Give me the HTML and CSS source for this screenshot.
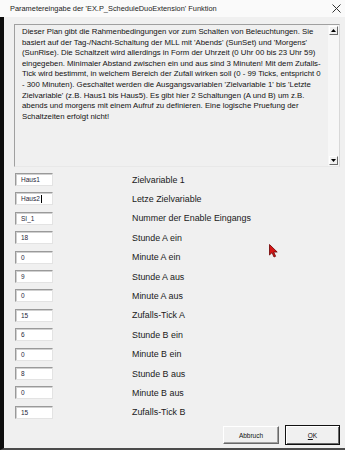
FILE: index.html
```html
<!DOCTYPE html>
<html lang="de">
<head>
<meta charset="UTF-8" />
<meta name="viewport" content="width=device-width, initial-scale=1" />
<title>Parametereingabe</title>
<link rel="stylesheet" href="styles.css">
</head>
<body>

<div class="window">
  <div class="titlebar">
    <span class="title">Parametereingabe der 'EX.P_ScheduleDuoExtension' Funktion</span>
    <svg class="close" width="9" height="9" viewBox="0 0 9 9">
      <path d="M0.5 0.5 L8.5 8.5 M8.5 0.5 L0.5 8.5" stroke="#333" stroke-width="1" fill="none"/>
    </svg>
  </div>

  <div class="frame">
    <div class="memo">
      <div class="memo-text">
        <div>Dieser Plan gibt die Rahmenbedingungen vor zum Schalten von Beleuchtungen. Sie</div>
        <div>basiert auf der Tag-/Nacht-Schaltung der MLL mit 'Abends' (SunSet) und 'Morgens'</div>
        <div>(SunRise). Die Schaltzeit wird allerdings in Form der Uhrzeit (0 Uhr 00 bis 23 Uhr 59)</div>
        <div>eingegeben. Minimaler Abstand zwischen ein und aus sind 3 Minuten! Mit dem Zufalls-</div>
        <div>Tick wird bestimmt, in welchem Bereich der Zufall wirken soll (0 - 99 Ticks, entspricht 0</div>
        <div>- 300 Minuten). Geschaltet werden die Ausgangsvariablen 'Zielvariable 1' bis 'Letzte</div>
        <div>Zielvariable' (z.B. Haus1 bis Haus5). Es gibt hier 2 Schaltungen (A und B) um z.B.</div>
        <div>abends und morgens mit einem Aufruf zu definieren. Eine logische Pruefung der</div>
        <div>Schaltzeiten erfolgt nicht!</div>
      </div>
      <div class="scroll">
        <span class="arrow"><svg width="5" height="3" viewBox="0 0 5 3"><path d="M0 3 L2.5 0 L5 3 Z" fill="#000"/></svg></span>
        <span class="arrow"><svg width="5" height="3" viewBox="0 0 5 3"><path d="M0 0 L5 0 L2.5 3 Z" fill="#000"/></svg></span>
      </div>
    </div>

    <div class="fields">
      <div class="field">Haus1</div><div class="label">Zielvariable 1</div>
      <div class="field">Haus2<span class="caret"></span></div><div class="label">Letze Zielvariable</div>
      <div class="field">SI_1</div><div class="label">Nummer der Enable Eingangs</div>
      <div class="field">18</div><div class="label">Stunde A ein</div>
      <div class="field">0</div><div class="label">Minute A ein</div>
      <div class="field">9</div><div class="label">Stunde A aus</div>
      <div class="field">0</div><div class="label">Minute A aus</div>
      <div class="field">15</div><div class="label">Zufalls-Tick A</div>
      <div class="field">6</div><div class="label">Stunde B ein</div>
      <div class="field">0</div><div class="label">Minute B ein</div>
      <div class="field">8</div><div class="label">Stunde B aus</div>
      <div class="field">0</div><div class="label">Minute B aus</div>
      <div class="field">15</div><div class="label">Zufalls-Tick B</div>
    </div>

    <div class="actions">
      <button class="btn">Abbruch</button>
      <button class="btn default"><u>O</u>K</button>
    </div>
  </div>
</div>

<!-- mouse pointer seen in the capture -->
<svg class="pointer" width="10" height="14" viewBox="0 0 10 14">
  <path d="M0.5 0.5 L0.5 11 L3 8.6 L5 13 L6.6 12.3 L4.7 8 L8.2 8 Z" fill="#d41616" stroke="#6b0000" stroke-width="0.8"/>
</svg>

</body>
</html>
```

FILE: styles.css
```css
body {
  margin: 0;
  background: #f0f0f0;
  font-family: 'Liberation Sans', Arial, sans-serif;
  color: #111;
}
.window {
  width: 345px;
  height: 450px;
  display: flex;
  flex-direction: column;
}
.titlebar {
  height: 17px;
  background: #fafafa;
  display: flex;
  align-items: center;
  justify-content: space-between;
  padding: 0 4px 0 10px;
  font-size: 7.4px;
  color: #222;
}
.close {
  display: block;
}
.frame {
  flex: 1;
  border-left: 4px solid #0d0d0d;
  border-bottom: 2px solid #4b4b4b;
  background: #f0f0f0;
  padding: 7px 5px 0 10px;
  display: flex;
  flex-direction: column;
}
.memo {
  width: 326px;
  height: 143px;
  box-sizing: border-box;
  border: 1px solid;
  border-color: #a0a0a0 #d8d8d8 #e8e8e8 #a0a0a0;
  background: #f0f0f0;
  position: relative;
  display: flex;
}
.memo-text {
  flex: 1;
  width: 0;
  padding: 2px 0 0 7px;
  font-size: 7.8px;
  line-height: 10.6px;
  white-space: nowrap;
  color: #111;
  position: relative;
  z-index: 1;
}
.scroll {
  width: 11px;
  background: #f7f7f7;
  display: flex;
  flex-direction: column;
  justify-content: space-between;
  align-items: center;
  padding: 1px 0;
}
.arrow {
  width: 9px;
  height: 9px;
  box-sizing: border-box;
  background: #f0f0f0;
  border: 1px solid;
  border-color: #fff #696969 #696969 #fff;
  display: flex;
  align-items: center;
  justify-content: center;
}
.fields {
  margin-top: 6px;
  padding-left: 1px;
  display: grid;
  grid-template-columns: 38px auto;
  grid-auto-rows: 13px;
  column-gap: 79px;
  row-gap: 6.42px;
  align-items: center;
}
.field {
  height: 13px;
  box-sizing: border-box;
  background: #fff;
  border: 1px solid;
  border-color: #9a9a9a #e3e3e3 #e3e3e3 #9a9a9a;
  box-shadow: inset 1px 1px 0 #d0d0d0;
  padding-left: 5px;
  font-size: 6.5px;
  line-height: 11px;
  color: #1f1f3a;
  display: flex;
  align-items: center;
}
.caret {
  display: inline-block;
  width: 1px;
  height: 8px;
  background: #000;
  margin-left: 1px;
}
.label {
  font-size: 8.9px;
  color: #1a1a1a;
}
.actions {
  margin-top: auto;
  padding-bottom: 3px;
  display: flex;
  justify-content: flex-end;
  align-items: center;
  gap: 6px;
}
.btn {
  width: 56px;
  height: 18px;
  background: #f0f0f0;
  border: 1px solid;
  border-color: #fff #696969 #696969 #fff;
  box-shadow: inset -1px -1px 0 #a0a0a0;
  font-family: 'Liberation Sans', Arial, sans-serif;
  font-size: 6.5px;
  color: #111;
  padding: 0;
}
.btn.default {
  width: 55px;
  height: 20px;
  border: 1px solid #111;
  box-shadow: inset 1px 1px 0 #fff, inset -1px -1px 0 #696969;
}
.pointer {
  position: absolute;
  left: 269px;
  top: 244px;
}
```
